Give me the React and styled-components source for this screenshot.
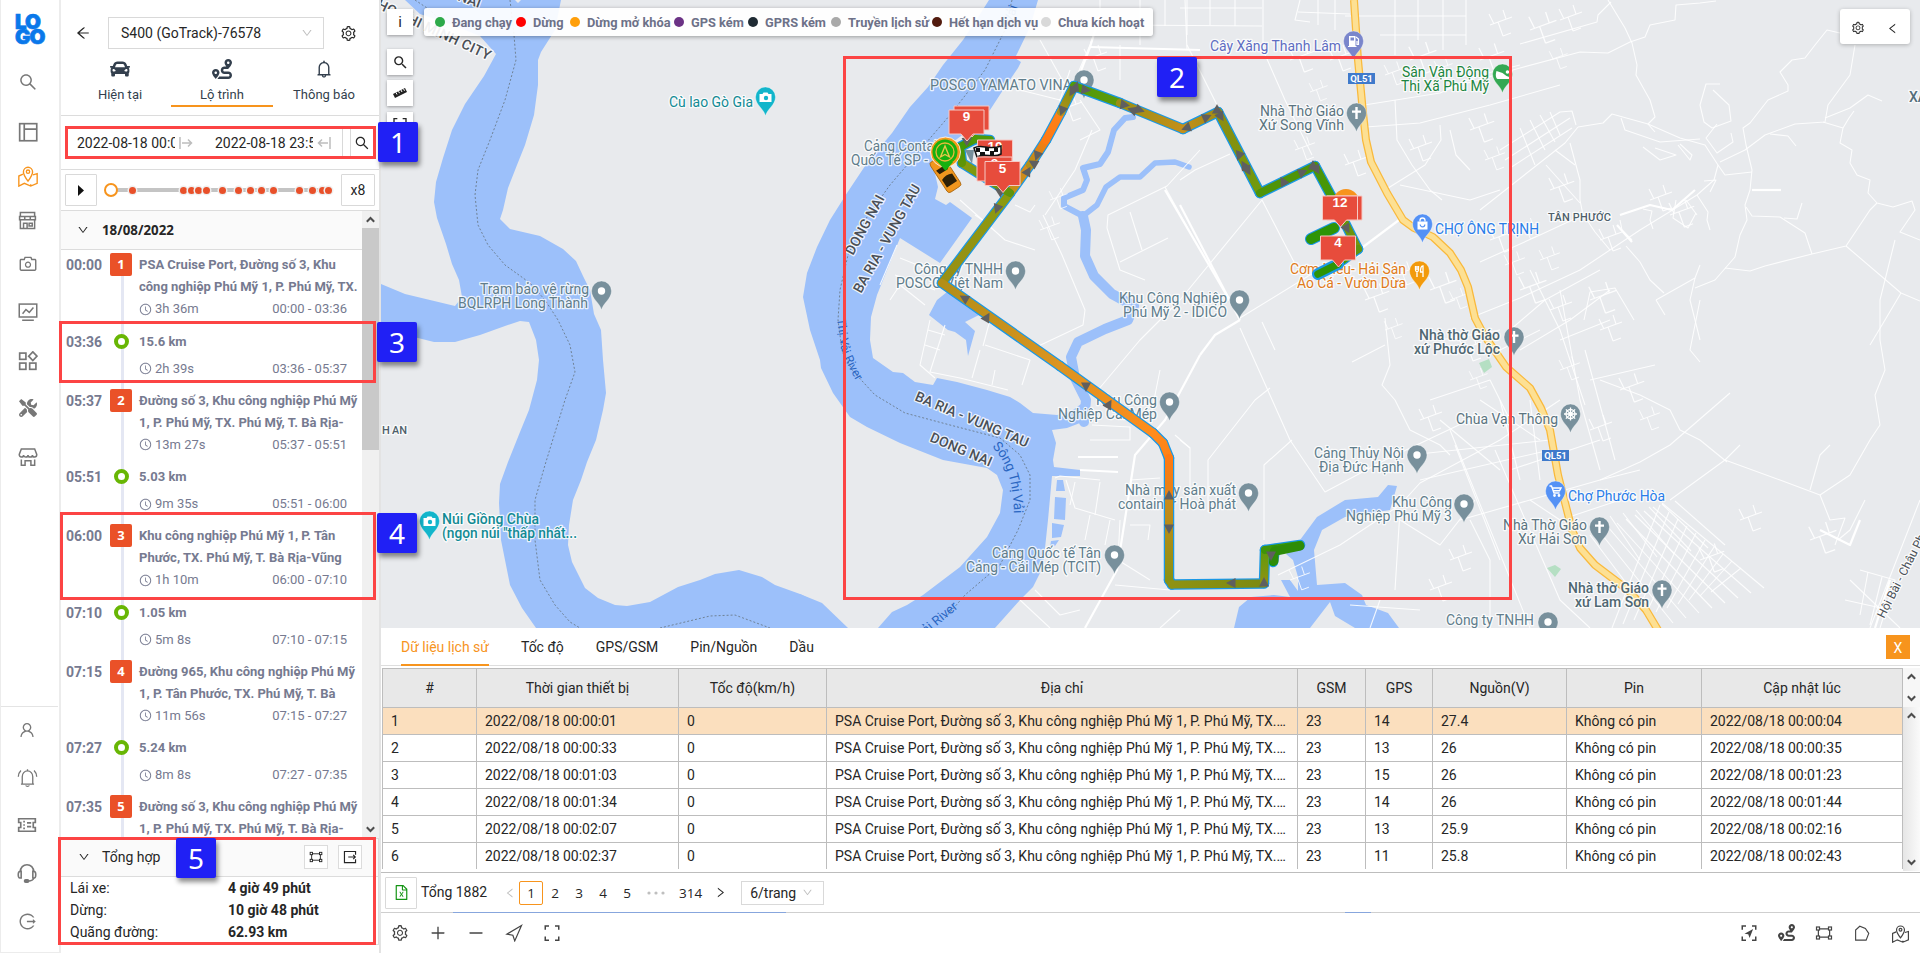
import React from 'react';
import styled, { createGlobalStyle, css } from 'styled-components';
import {
  AiOutlineSetting, AiOutlineSearch, AiOutlineArrowLeft, AiOutlineDown, AiOutlineCamera,
  AiOutlineUser, AiOutlineLogout, AiOutlineClockCircle,
  AiOutlineBell, AiOutlineLeft, AiOutlineRight, AiOutlinePlus, AiOutlineMinus, AiOutlineFileExcel,
} from 'react-icons/ai';
import { FaCar, FaRoute, FaTools } from 'react-icons/fa';
import { MdSearch } from 'react-icons/md';

const ORANGE = '#f7941d';
const SLATE = '#607d8b';

const GlobalStyle = createGlobalStyle`
  * { box-sizing: border-box; }
  body { margin: 0; background: #fff; overflow: hidden; }
  body, text { font-family: Roboto, "Liberation Sans", sans-serif; }
  body { font-size: 14px; color: #262626; }
  svg { display: block; flex: none; }
`;

const Screen = styled.div`
  position: relative;
  display: flex;
  width: 1920px;
  height: 953px;
  overflow: hidden;
`;

/* ---------- navigation rail ---------- */
const Rail = styled.nav`
  width: 61px;
  flex: none;
  display: flex;
  flex-direction: column;
  border-left: 1px solid #ececec;
  border-right: 2px solid #ececec;
  border-bottom: 1px solid #ececec;
  color: #777;
`;
const Logo = styled.div`
  height: 57px;
  padding: 14px 0 0 14px;
  font: 900 20.5px/15px Inter, sans-serif;
  letter-spacing: -0.9px;
  color: #0a78ea;
  -webkit-text-stroke: 0.7px #0a78ea;
`;
const RailItem = styled.div`
  height: ${(p) => p.$h || 48}px;
  padding-right: 5px;
  display: flex;
  align-items: center;
  justify-content: center;
  color: ${(p) => (p.$on ? ORANGE : 'inherit')};
`;
const RailTop = styled.div`flex: 1;`;
const RailBottom = styled.div`
  height: 246px;
  margin-right: 1px;
  border-top: 1px solid #e4e4e4;
`;

/* ---------- left panel ---------- */
const Panel = styled.aside`
  width: 320px;
  flex: none;
  display: flex;
  flex-direction: column;
  border-right: 2px solid #e3e3e3;
`;
const PanelTop = styled.div`
  height: 116px;
  border-bottom: 1px solid #dcdcdc;
`;
const VehicleRow = styled.div`
  display: flex;
  align-items: center;
  height: 49px;
  padding: 17px 22px 0 14px;
  svg.gear { margin-left: auto; }
`;
const VehicleSelect = styled.div`
  width: 216px;
  height: 32px;
  margin-left: 17px;
  padding: 0 10px 0 12px;
  display: flex;
  align-items: center;
  justify-content: space-between;
  border: 1px solid #d9d9d9;
`;
const PanelTabs = styled.div`
  display: flex;
  padding: 0 3px 0 8px;
`;
const PanelTab = styled.div`
  width: 102px;
  height: 58px;
  padding-top: 10px;
  display: flex;
  flex-direction: column;
  align-items: center;
  gap: 8px;
  font-size: 13px;
  color: #333f4d;
  border-bottom: 2px solid ${(p) => (p.$on ? ORANGE : 'transparent')};
`;
const RangeRow = styled.div`
  display: flex;
  align-items: center;
  height: 54px;
  padding-left: 16px;
  border-bottom: 1px solid #dcdcdc;
`;
const DateText = styled.div`
  width: ${(p) => p.$w}px;
  margin-right: 4px;
  overflow: hidden;
  white-space: nowrap;
`;
const RangeArrow = styled.svg`margin-right: ${(p) => p.$gap}px;`;
const RangeSearch = styled.div`
  height: 30px;
  width: 9px;
  margin-right: 3px;
  border: solid #d9d9d9;
  border-width: 0 1px;
`;
const PlayerRow = styled.div`
  height: 41px;
  display: flex;
  align-items: center;
  padding: 0 3px 0 4px;
  border-bottom: 1px solid #dcdcdc;
`;
const SquareButton = styled.div`
  width: ${(p) => p.$w}px;
  height: 32px;
  display: flex;
  align-items: center;
  justify-content: center;
  border: 1px solid #d9d9d9;
  border-radius: 1px;
`;
const Slider = styled.div`
  position: relative;
  width: 220px;
  height: 4px;
  margin: 0 10px 0 14px;
  background: #c4c4c4;
`;
const SliderDot = styled.i`
  position: absolute;
  top: -1.5px;
  width: 7px;
  height: 7px;
  margin-left: -3.5px;
  border-radius: 50%;
  background: #e8502a;
  box-shadow: 0 0 0 1.5px #efefef;
`;
const SliderHandle = styled.i`
  position: absolute;
  top: -5px;
  left: -7px;
  width: 14px;
  height: 14px;
  border: 2px solid ${ORANGE};
  border-radius: 50%;
  background: #fff;
`;
const ScrollArea = styled.div`
  display: flex;
  height: 627px;
  overflow: hidden;
`;
const Timeline = styled.div`
  flex: 1;
  min-width: 0;
`;
const DayHeader = styled.div`
  display: flex;
  align-items: center;
  gap: 13px;
  height: 39px;
  padding-left: 16px;
  background: #fafafa;
  border-bottom: 1px solid #dcdcdc;
  font-weight: 700;
  font-family: "Noto Sans", Roboto, sans-serif;
  font-size: 13.3px;
`;
const Stops = styled.div`
  padding-top: 3px;
  color: #767a90;
  background: linear-gradient(#e4e7f3, #e4e7f3) 60px 20px / 3px 100% no-repeat;
`;
const Stop = styled.div`
  display: grid;
  grid-template-columns: 49px 22px 1fr;
  height: ${(p) => (p.$move ? 59 : 76.5)}px;
  padding-left: 5px;
`;
const StopTime = styled.div`
  padding-top: 1px;
  font-weight: 700;
  line-height: 22px;
`;
const StopBadge = styled.div`
  height: 23px;
  margin-left: -5px;
  width: 22px;
  border-radius: 2px;
  background: #ea5128;
  color: #fff;
  font: 700 13px/22px "Open Sans", sans-serif;
  text-align: center;
`;
const MoveRing = styled.div`
  width: 15px;
  height: 15px;
  margin: 4px 0 0 -1px;
  border: 4px solid #68b604;
  border-radius: 50%;
  background: #fff;
`;
const StopBody = styled.div`
  min-width: 0;
  padding: 1px 15px 0 2px;
  font-size: 13px;
  line-height: 22px;
`;
const Address = styled.div`
  font-weight: 700;
  white-space: nowrap;
`;
const StopMeta = styled.div`
  display: flex;
  align-items: center;
  gap: 3px;
  margin-top: ${(p) => (p.$move ? 5 : 0)}px;
  span:last-child { margin-left: auto; }
`;
const Scrollbar = styled.div`
  width: 17px;
  flex: none;
  display: flex;
  flex-direction: column;
  align-items: center;
  justify-content: space-between;
  padding: 5px 0;
  background: ${(p) => p.$bg || '#f0f0f0'};
  height: ${(p) => (p.$h ? p.$h + 'px' : 'auto')};
`;
const Thumb = styled.div`
  width: 17px;
  height: 222px;
  margin-top: 5px;
  margin-bottom: auto;
  background: #c9c9c9;
`;
const Summary = styled.section`
  height: 107px;
  border: 1px solid #dcdcdc;
  border-left: 0;
`;
const SummaryHead = styled.div`
  display: flex;
  align-items: center;
  height: 38px;
  padding: 0 16px 1px 17px;
  background: #fafafa;
  border-bottom: 1px solid #dcdcdc;
  span { margin: 0 auto 0 12px; }
`;
const MiniButton = styled.div`
  width: 24px;
  height: 24px;
  margin-left: 10px;
  display: flex;
  align-items: center;
  justify-content: center;
  background: #fff;
  border: 1px solid #dcdcdc;
`;
const SummaryRow = styled.div`
  display: grid;
  grid-template-columns: 158px 1fr;
  padding-left: 9px;
  line-height: 22px;
`;

/* ---------- main column ---------- */
const Main = styled.main`
  flex: 1;
  min-width: 0;
  display: flex;
  flex-direction: column;
`;
const MapArea = styled.div`
  position: relative;
  height: 628px;
  overflow: hidden;
  background: #e8eaed;
`;
const MapButtons = styled.div`
  position: absolute;
  left: 6px;
  top: 9px;
  display: flex;
  flex-direction: column;
  gap: 5px;
`;
const MapButton = styled.div`
  width: 26px;
  height: 26px;
  display: flex;
  align-items: center;
  justify-content: center;
  background: #fff;
  box-shadow: 0 1px 3px rgba(0, 0, 0, 0.35);
  margin-bottom: ${(p) => p.$mb || 0}px;
  font-size: 15px;
`;
const Legend = styled.div`
  position: absolute;
  left: 43px;
  top: 8px;
  width: 729px;
  height: 28px;
  padding-left: 11px;
  display: flex;
  align-items: center;
  border-radius: 3px;
  background: rgba(255, 255, 255, 0.92);
  box-shadow: 0 1px 4px rgba(0, 0, 0, 0.35);
  color: #6d7188;
  font-weight: 700;
  font-size: 12.8px;
`;
const LegendItem = styled.div`
  width: ${(p) => p.$w}px;
  flex: none;
  display: flex;
  align-items: center;
  gap: 7px;
  white-space: nowrap;
  &::before {
    content: '';
    flex: none;
    width: 10px;
    height: 10px;
    border-radius: 50%;
    background: ${(p) => p.$c};
  }
`;
const MapTools = styled.div`
  position: absolute;
  right: 10px;
  top: 9px;
  width: 70px;
  height: 35px;
  display: flex;
  align-items: center;
  justify-content: space-between;
  padding: 3px 11px 0;
  border-radius: 3px;
  background: #fff;
  box-shadow: 0 1px 4px rgba(0, 0, 0, 0.25);
`;
const DataTabs = styled.div`
  display: flex;
  gap: 32px;
  height: 38px;
  padding: 0 10px 0 20px;
  border-bottom: 1px solid #dedede;
`;
const DataTab = styled.div`
  padding-top: 2px;
  line-height: 35px;
  height: 38px;
  color: ${(p) => (p.$on ? ORANGE : 'inherit')};
  border-bottom: 2px solid ${(p) => (p.$on ? ORANGE : 'transparent')};
`;
const CloseButton = styled.div`
  width: 24px;
  height: 24px;
  margin: 7px 0 0 auto;
  padding-top: 2px;
  display: flex;
  align-items: center;
  justify-content: center;
  background: ${ORANGE};
  color: #fff;
`;
const TableWrap = styled.div`
  height: 205px;
  margin-top: 2px;
  padding-left: 1px;
  display: flex;
  border-bottom: 1px solid #bdbdbd;
`;
const Table = styled.div`
  width: 1521px;
  border-top: 1px solid #bdbdbd;
  border-left: 1px solid #bdbdbd;
  height: 201px;
  overflow: hidden;
`;
const TableRow = styled.div`
  display: grid;
  grid-template-columns: 94px 202px 148px 471px 68px 67px 134px 135px 201px;
  background: ${(p) => (p.$head ? '#e8e8e8' : p.$on ? '#fbdfbe' : '#fff')};
  height: ${(p) => (p.$head ? 39 : 27)}px;
  line-height: ${(p) => (p.$head ? 39 : 27)}px;
  text-align: ${(p) => (p.$head ? 'center' : 'left')};
`;
const Cell = styled.div`
  padding: 0 8px;
  border-right: 1px solid #bdbdbd;
  border-bottom: 1px solid #bdbdbd;
  white-space: nowrap;
  overflow: hidden;
  text-overflow: ellipsis;
`;
const TableBars = styled.div`width: 17px;`;
const Pager = styled.div`
  height: 39px;
  display: flex;
  align-items: center;
  padding-left: 4px;
`;
const PagerTotal = styled.span`margin: 0 13px 1px 4px;`;
const PageItem = styled.div`
  width: ${(p) => p.$w || 24}px;
  height: 24px;
  display: flex;
  align-items: center;
  justify-content: center;
  font: 13.5px "Open Sans", sans-serif;
  color: ${(p) => (p.$dim ? '#bfbfbf' : '#262626')};
  ${(p) => p.$on && css`border: 1px solid ${ORANGE}; border-radius: 2px;`}
`;
const PageSize = styled.div`
  width: 83px;
  height: 24px;
  margin-left: 9px;
  padding: 0 10px 0 8px;
  display: flex;
  align-items: center;
  justify-content: space-between;
  border: 1px solid #d9d9d9;
`;
const MapEdge = styled.div`
  height: 1px;
  background: linear-gradient(90deg, #cfcfcf 72px, #87a6dd 72px 405px, #cfcfcf 405px 964px, #87a6dd 964px 990px, #cfcfcf 990px);
`;
const Toolbar = styled.footer`
  flex: 1;
  display: flex;
  align-items: center;
  justify-content: space-between;
  padding: 0 10px;
  color: #444;
`;
const ToolGroup = styled.div`
  display: flex;
  gap: 20px;
`;

/* ---------- annotations over the page ---------- */
const Frame = styled.div`
  position: absolute;
  left: ${(p) => p.$x}px;
  top: ${(p) => p.$y}px;
  width: ${(p) => p.$w}px;
  height: ${(p) => p.$h}px;
  border: 3px solid #fc4444;
`;
const Callout = styled.div`
  position: absolute;
  left: ${(p) => p.$x}px;
  top: ${(p) => p.$y}px;
  width: 40px;
  height: 40px;
  border-radius: 2px;
  background: #2020f5;
  color: #fff;
  text-align: center;
  font: 28px/40px "Noto Sans", sans-serif;
  box-shadow: 2px 4px 5px rgba(0, 0, 0, 0.45);
`;

/* ---------- line icons ---------- */
const Line = ({ size = 20, w = 1.6, children }) => (
  <svg width={size} height={size} viewBox="0 0 24 24" fill="none" stroke="currentColor" strokeWidth={w}>{children}</svg>
);
const LayoutIcon = () => <Line w={2}><rect x="2" y="2" width="20.5" height="20.5" /><path d="M7.5 2v20.5M7.5 8.5h15" /></Line>;
const MapPinIcon = ({ size = 22, w = 1.5 }) => (
  <Line size={size} w={w}>
    <path d="M12 17.5C9 13.500 7 10.600 7 7.500a5 5 0 0 1 10 0C17 10.600 15 13.500 12 17.500z" /><circle cx="12" cy="7.300" r="1.800" />
    <path d="M6.500 10 2 12v11l6-3 7 3 7-3V9.500l-4.500 1.300M15 23v-2" />
  </Line>
);
const StoreIcon = () => (
  <Line w={1.9} size={19}>
    <path d="M3 6.500V2h18v4.500M2 7h20v4H2zM3 11v11h18V11M7 22v-6.500h4.500V22M14 15.500h4v3.500h-4zM8.500 7v4M15.500 7v4" />
  </Line>
);
const StallIcon = () => (
  <Line w={1.8} size={20}>
    <path d="M4 2.500h16L22.500 9c0 2-1 3-2.500 3s-2.700-1-2.700-2.500C17.300 11 16 12 14.700 12S12 11 12 9.500C12 11 10.700 12 9.300 12s-2.600-1-2.600-2.500C6.700 11 5.500 12 4 12s-2.500-1-2.500-3zM4 15v7h4.500v-5.500h7V22H20v-7" />
  </Line>
);
const MonitorIcon = () => <Line w={1.8}><rect x="1.500" y="2.500" width="21" height="15.500" /><path d="m5.500 14 4-5 4 3.500 5-6M5 22h14" /></Line>;
const ShapesIcon = () => (
  <Line w={2}><rect x="2" y="2.500" width="7.500" height="7.500" /><rect x="2" y="14.500" width="7.500" height="7.500" /><rect x="14" y="14.500" width="7.500" height="7.500" /><path d="m17.800 1 5 5.200-5 5.200-5-5.200z" /></Line>
);
const RingingIcon = () => (
  <Line size={21} w={1.5}><path d="M4.500 19.500h15M6 19.500V11c0-3.500 2.500-6.500 6-6.500s6 3 6 6.500v8.500M12 4.500V2.500M10 21c.5 1.500 3.500 1.500 4 0M4.500 4C2.500 6 1.500 8 1.500 11M19.500 4c2 2 3 4 3 7" /></Line>
);
const TicketIcon = () => (
  <Line w={2}><path d="M2 4.500h20v4.500h-2.500v6H22v4.500H2V15h2.500V9H2z" /><path d="M8.500 7v10" strokeDasharray="2 2" /><path d="M12 9.500h5M12 14h5" /></Line>
);
const HeadsetIcon = () => (
  <Line w={1.9}><path d="M4 10.500C4 5.500 7.500 2 12 2s8 3.500 8 8.500M20 18c0 2-3 3.500-6 3.500" /><path d="M5 10v8H3.500C2 18 1.500 16 1.500 14S2 10 3.500 10zM19 10v8h1.500c1.500 0 2-2 2-4s-.5-4-2-4z" /><rect x="9" y="20" width="5" height="3" rx="1.500" fill="currentColor" /></Line>
);
const PolygonIcon = ({ size = 18 }) => (
  <Line size={size} w={1.6}><rect x="2" y="4" width="4" height="4" /><rect x="18" y="4" width="4" height="4" /><rect x="2" y="16" width="4" height="4" /><rect x="18" y="16" width="4" height="4" /><path d="M6 6.500h12M6 17.500h12M4.500 8v8M19.500 8v8" /></Line>
);
const ExitIcon = () => <Line size={14} w={2}><path d="M21.500 8V2.500h-19v19h19V16M9 12h12M17.500 8.500 21 12l-3.500 3.500" /></Line>;
const ExpandIcon = ({ size = 18, children }) => <Line size={size} w={2}><path d="M8 2.500H3v5M16 2.500h5v5M8 21.500H3v-5M16 21.500h5v-5" />{children}</Line>;
const Chevron = ({ up }) => (
  <svg width="9" height="7" viewBox="0 0 9 7" fill="none" stroke="#4d4d4d" strokeWidth="2"><path d={up ? 'M.8 5.800 4.500 2l3.700 3.800' : 'M.8 1.200 4.500 5l3.700-3.800'} /></svg>
);

/* ---------- map drawing ---------- */
const WATER = [
  'M405 0 420 14 450 24 480 36 496 54 484 76 465 104 452 130 443 158 436 182 434 202 437 218 446 244 452 264 459 280 462 297 455 306 430 300 405 294 381 284V328L400 334 418 338 434 342 455 342 480 335 505 326 520 321 529 322 536 340 539 360 537 380 529 410 520 432 508 462 500 484 499 503 501 540 510 585 522 608 536 628H847L832 615 816 602 800 594 775 585 762 577 739 570 715 574 700 580 678 587 650 602 627 606 615 605 598 598 585 588 572 562 568 545 569 525 573 500 581 480 587 462 596 440 603 410 606 393 603 360 601 330 594 314 590 290 583 276 576 261 563 249 540 236 510 229 500 219 503 210 508 188 517 165 525 145 534 115 538 85 538 60 541 52 555 30 561 0z',
  'M989 0 975 22 963 40 943 65 928 87 910 107 892 133 867 163 847 193 830 220 817 247 807 273 803 297 810 330 820 360 821 368 833 393 850 417 867 427 900 443 943 460 987 468 997 475 1003 490 1000 513 987 537 960 567 923 595 907 605 892 612 878 628H995L1020 600 1033 587 1043 567 1048 520 1052 476 1080 476 1080 470 1054 467 1053 460 1056 443 1052 430 1067 428 1080 423 1090 410 1089 398 1073 410 1057 415 1033 413 1020 403 1010 397 987 390 957 382 937 378 933 385 915 382 903 373 893 372 873 358 870 340 871 317 877 295 900 238 940 263 972 218 950 202 946 205 935 199 938 187 932 160 945 148 965 133 990 110 1003 90 1018 68 1021 62 1015 58 1030 27 1038 0z',
  'M929 315 937 300 952 288 985 312 965 322 975 331 968 356 966 340 955 332 948 330z',
  'M1057 480h6l2 11h-9zM1055 497l11 1-1 22-11-1zM1052 523l12 2-3 12-9 1zM1051 541l8-1-4 6-5 1z',
  'M1388 485 1397 486 1390 510 1345 517 1322 530 1314 550 1317 585 1345 583 1362 595 1366 605 1388 613 1399 628H1355L1335 616 1330 602 1310 628H1234L1239 607 1251 597 1274 595 1290 597 1281 580 1290 580 1298 591 1298 577 1293 560 1286 554 1300 540 1317 517 1345 500 1378 497z',
  'M778 628 800 594 822 603 848 628z',
];
const STREAMS = [
  ['1084,422 1086,400 1075,378 1071,357 1078,342 1105,329 1128,320 1134,306 1112,294 1094,276 1085,256 1086,230 1083,216', 10],
  ['1083,216 1064,206 1064,198 1083,190 1087,180 1083,168 1100,164 1108,152 1114,130 1125,118 1133,117', 6],
  ['1083,216 1097,205 1106,187 1120,177 1140,177 1155,163 1175,162 1189,167', 5.500],
];
const DASHES = [
  '415,0 430,10 440,20', '510,0 514,35 516,60 505,100 490,140 478,170 475,195 478,225 488,245 505,265 530,283 545,300 558,320 570,345 575,372 565,400 545,465 535,500 535,540 540,580 555,605 570,622 580,628',
  '1012,0 1005,30 985,70 950,115 890,185 865,220 848,255 840,290 838,320 842,350 852,370 875,395 905,413 950,425 1000,438 1020,455 1030,475 1030,500 1018,530 1000,565 965,595 945,618', '660,628 710,616 735,615 770,628',
];
const ROADS = [
  '1520,44 1597,22 1598,15 1611,2', '1450,88 1520,68 1580,52 1608,53 1630,42 1645,37 1650,25 1675,20 1676,5 1700,3 1716,1',
  '1608,0 1625,28 1632,43 1637,65 1636,75 1650,100 1655,117 1648,124 1680,138 1705,145 1718,165 1714,180 1697,195 1640,230 1580,270 1520,298 1470,318',
  '1578,127 1603,123 1612,114 1648,124 1655,132', '1621,118 1625,130 1660,142 1700,139', '1643,147 1660,160 1676,155 1655,148', '1678,145 1690,160 1692,155 1680,144',
  '1720,84 1706,84 1700,105 1704,122 1712,128 1731,121 1729,105 1713,90', '1717,124 1706,138 1717,153 1733,142 1731,133',
  '1840,33 1827,30 1815,45 1805,58 1792,60 1780,72 1788,85 1788,91 1768,100 1750,123 1743,128 1746,145 1752,170 1750,190 1745,205 1747,220 1740,235 1735,257 1715,280 1695,288',
  '1855,45 1850,75 1828,105 1825,122 1795,124 1765,135 1745,150 1720,162', '1825,118 1850,108 1868,95 1882,101', '1770,134 1788,136 1796,146', '1854,111 1849,118 1843,128',
  '1823,122 1843,128 1840,143 1852,150 1850,163 1857,175 1870,180 1868,193 1877,203 1893,207 1912,201 1915,210 1900,232 1920,240',
  '1877,203 1870,210 1846,246 1812,254 1765,266 1750,271 1725,268', '1846,246 1901,293 1920,301', '1901,293 1885,320 1870,345',
  '1746,207 1752,216 1780,217 1805,233 1812,254', '1784,218 1797,219 1802,203', '1718,165 1725,175 1752,172', '1752,190 1781,190',
  '1697,195 1708,212 1707,220 1710,230', '1704,181 1716,180 1710,192', '1480,210 1565,143 1578,127', '1570,143 1580,180 1580,200 1583,215 1540,235 1480,262', '1546,165 1580,203', '1555,150 1575,165',
  '1587,220 1595,232 1610,250', '1626,246 1640,262 1650,280 1664,293', '1584,320 1590,292 1615,288 1634,320', '1656,300 1695,278 1700,265', '1656,300 1665,315', '1695,278 1690,300 1700,340',
  '1620,220 1622,230 1632,240', '1643,209 1652,211 1650,220 1653,229', '1686,200 1697,215', '1676,200 1673,218 1688,228 1696,213',
  '1187,0 1187,35', '1263,0 1263,50 1285,100 1312,155', '1120,25 1262,26', '1187,45 1218,107', '1180,180 1195,170 1230,154', '1180,8 1262,8', '1210,0 1210,25', '1235,0 1235,26',
  '1345,16 1466,16', '1395,0 1395,55', '1418,0 1418,40', '1443,0 1443,50', '1466,0 1466,45', '1380,35 1466,35', '1298,12 1350,14', '1300,0 1295,20 1310,22', '1318,0 1318,25', '1335,0 1335,30',
  '1395,100 1397,140 1412,165 1430,190 1442,200', '1358,106 1440,93 1480,75 1520,65', '1366,127 1420,123 1490,105 1560,85', '1385,190 1425,165 1441,140 1440,125', '1400,185 1470,200 1500,190',
  '1450,130 1456,155 1470,170', '1500,150 1560,112 1572,111 1576,125', '1505,160 1570,118', '1510,168 1572,128', '1520,128 1535,165', '1530,120 1545,150', '1540,115 1555,142', '1550,112 1560,135',
  '1180,300 1262,200 1294,262', '1043,215 1062,255 1085,310 1083,325 1030,350', '1107,228 1108,215 1167,186 1200,150', '1165,187 1200,250', '1107,228 1120,270 1145,280', '1120,262 1168,238', '1130,212 1142,250',
  '1100,0 1100,15 1090,45 1075,80', '1140,0 1140,45', '1165,0 1165,26', '1185,0 1187,50', '1120,45 1120,80', '1045,215 1075,170 1092,130', '1040,40 1065,85', '1020,90 1060,100 1070,70', '1080,100 1100,130 1080,140', '1035,205 1030,212 1015,205',
  '960,200 1005,240 1035,250', '975,215 990,225', '1240,318 1310,275 1345,262 1360,255', '1262,322 1275,350', '1240,328 1290,440 1325,492 1385,460 1480,415',
  '1385,318 1390,365 1382,385 1395,400 1410,430 1440,445 1450,455', '1352,362 1385,345', '1208,512 1208,460 1255,400 1270,388', '1264,540 1264,465 1292,440', '1180,440 1190,448 1190,500',
  '1278,575 1340,545 1400,505 1420,483 1500,440 1560,400', '1470,520 1490,560 1490,628', '1495,450 1560,600 1590,628', '1455,445 1500,560', '1450,430 1530,628', '1400,510 1395,590', '1460,520 1530,500 1600,480 1640,470', '1400,520 1440,545 1475,500',
  '1895,240 1880,300 1880,340 1885,370 1875,395 1880,425 1870,440 1850,475 1820,495 1780,480 1725,460 1670,500', '1730,393 1670,445 1640,462 1600,480', '1725,460 1740,445', '1830,445 1820,455 1810,490', '1820,495 1830,520 1845,518 1835,545', '1865,500 1850,530 1838,540',
  '1600,380 1640,395 1670,410 1680,430 1700,440 1727,462', '1700,300 1690,350 1700,362', '1560,290 1580,400 1600,470', '1530,270 1560,330 1585,405', '1510,330 1545,300 1600,270', '1520,350 1570,320 1610,290', '1560,340 1610,320', '1590,380 1655,365', '1500,350 1540,330', '1585,350 1615,460',
  '1440,340 1500,330', '1430,400 1490,380 1510,420', '1440,420 1500,470', '1480,400 1540,440', '1410,455 1550,440', '1420,480 1550,450', '1510,470 1600,440', '1530,500 1560,520 1620,500', '1500,400 1520,480', '1530,400 1540,480',
  '1870,628 1920,500', '1850,580 1900,628', '1860,570 1895,580 1880,628', '1845,600 1890,610', '1868,572 1860,615', '1882,577 1870,625',
  '930,320 920,365 935,378', '945,325 930,372 960,378 1008,390', '928,330 945,335', '925,345 940,350', '985,345 1030,360 1022,385', '980,350 972,378', '983,346 990,320', '995,370 992,385',
  '1055,478 1060,476 1100,480', '1066,480 1075,508 1115,520', '1075,482 1070,505', '1100,482 1095,515', '1090,515 1085,540', '1110,520 1105,545', '1120,520 1118,560 1150,580', '1130,525 1150,525 1148,540', '1160,370 1150,420', '1175,435 1190,448',
  '1092,425 1130,427 1130,440 1090,440z', '1098,390 1140,340 1180,300', '1020,600 1050,628', '1035,590 1060,615 1080,610', '1115,585 1170,590', '1130,480 1160,478',
  '880,285 897,245', '890,300 900,285 925,305', '895,275 935,290', '900,258 930,270', '1180,610 1160,628', '1350,605 1420,610', '1370,628 1380,600',
];
const GRID = [];
for (let i = 0; i < 10; i++) GRID.push(`${1612 + i * 11},${628 - i * 4} ${1660 + i * 9},${505 + i * 7}`);
for (let i = 0; i < 9; i++) GRID.push(`${1590 + i * 9},${535 - i * 4} ${1660 + i * 13},${628 - i * 5}`);
for (let i = 0; i < 6; i++) GRID.push(`${1610 + i * 13},${516 - i * 3} ${1640 + i * 17},${560 - i * 3}`);
const TWIGS = [
  [1290, 60, 1.1], [1310, 92, 0.8], [1330, 60, 1], [1385, 75, 0.9], [1410, 60, 1.2], [1435, 70, 0.8], [1470, 130, 1.1], [1485, 160, 0.9], [1410, 150, 1], [1430, 290, 1.2], [1450, 300, 0.8],
  [1490, 240, 1.1], [1505, 265, 0.9], [1520, 290, 1.2], [1540, 260, 0.9], [1550, 310, 1], [1520, 230, 0.8], [1395, 275, 0.9], [1365, 300, 1.1], [1385, 330, 0.8], [1460, 350, 1], [1470, 380, 0.8], [1420, 420, 1],
  [1590, 300, 1.2], [1600, 330, 1], [1620, 390, 1.1], [1640, 420, 0.9], [1590, 430, 1], [1560, 370, 0.9], [1650, 200, 1], [1670, 215, 1.1], [1600, 240, 1], [1550, 190, 1.1], [1530, 30, 1.2], [1560, 20, 1], [1550, 60, 0.8],
  [1490, 25, 1], [1480, 60, 1.1], [1345, 165, 1], [1320, 120, 1], [1295, 150, 0.9], [1060, 110, 1], [1050, 200, 0.8], [1085, 60, 1], [1290, 580, 0.9], [1450, 560, 1], [1430, 590, 1], [1740, 520, 1], [1700, 560, 1.1], [1810, 540, 1.2], [1040, 230, 0.9],
];
const WIDE = ['1180,205 1240,320', '1200,355 1215,335 1240,320', '1200,355 1165,420 1135,455 1128,500 1117,570 1085,628', '1165,190 1240,318', '1363,247 1403,217', '1090,47 1200,50', '1100,15 1090,47 1068,105', '1078,457 1118,457', '1080,470 1118,472', '1620,215 1650,205 1672,210 1695,190', '1617,225 1632,242', '1752,190 1781,190', '1860,520 1850,545 1820,530', '1890,580 1875,628'];
const HIGHWAY = '1354,0 1358,60 1363,113 1366,140 1371,162 1387,193 1403,220 1414,228 1433,237 1450,253 1461,270 1468,287 1475,318 1484,335 1506,367 1530,388 1541,408 1550,430 1558,475 1572,530 1580,548 1595,565 1628,590 1646,610 1658,630';

const G = '#5b7480';
const LABELS = [
  [669, 753, 107, 'Cù lao Gò Gia', '#128a94'], [480, 589, 294, 'Trạm bảo vệ rừng', SLATE], [458, 588, 308, 'BQLRPH Long Thành', SLATE],
  [930, 1072, 90, 'POSCO YAMATO VINA', SLATE], [864, 956, 151, 'Cảng Container', SLATE], [851, 928, 165, 'Quốc Tế SP -', SLATE],
  [914, 1003, 274, 'Công ty TNHH', SLATE], [896, 1003, 288, 'POSCO Việt Nam', SLATE], [1119, 1227, 303, 'Khu Công Nghiệp', SLATE], [1123, 1227, 317, 'Phú Mỹ 2 - IDICO', SLATE],
  [1096, 1157, 405, 'Khu Công', SLATE], [1058, 1157, 419, 'Nghiệp Cái Mép', SLATE], [1125, 1236, 495, 'Nhà máy sản xuất', SLATE], [1118, 1236, 509, 'container Hoà phát', SLATE],
  [992, 1101, 558, 'Cảng Quốc tế Tân', SLATE], [966, 1101, 572, 'Cảng - Cái Mép (TCIT)', SLATE], [1314, 1404, 458, 'Cảng Thủy Nội', SLATE], [1319, 1404, 472, 'Địa Đức Hạnh', SLATE],
  [1392, 1452, 507, 'Khu Công', SLATE], [1346, 1452, 521, 'Nghiệp Phú Mỹ 3', SLATE], [1210, 1341, 51, 'Cây Xăng Thanh Lâm', '#5f6dc2'],
  [1260, 1344, 116, 'Nhà Thờ Giáo', G], [1259, 1344, 130, 'Xứ Song Vĩnh', G], [1402, 1489, 77, 'Sân Vận Động', '#1c8540'], [1401, 1489, 91, 'Thị Xã Phú Mỹ', '#1c8540'],
  [1435, 1539, 234, 'CHỢ ÔNG TRỊNH', '#2a7de9'], [1290, 1406, 274, 'Cơm Niêu- Hải Sản', '#e07b1a'], [1297, 1406, 288, 'Ao Cá - Vườn Dừa', '#e07b1a'],
  [1419, 1500, 340, 'Nhà thờ Giáo', '#4f6772', 500], [1414, 1500, 354, 'xứ Phước Lộc', '#4f6772', 500], [1456, 1558, 424, 'Chùa Vạn Thông', G], [1568, 1665, 501, 'Chợ Phước Hòa', '#2a7de9'],
  [1503, 1587, 530, 'Nhà Thờ Giáo', G], [1518, 1587, 544, 'Xứ Hải Sơn', G], [1568, 1649, 593, 'Nhà thờ Giáo', '#4f6772', 500], [1575, 1649, 607, 'xứ Lam Sơn', '#4f6772', 500],
  [1446, 1534, 625, 'Công ty TNHH', SLATE], [442, 539, 524, 'Núi Giồng Chùa', '#128a94', 500], [442, 577, 538, '(ngọn núi "thấp nhất...', '#128a94', 500],
];
const PINS = [
  [1084, 80], [1015.5, 271], [1239.5, 300], [1169.5, 402], [1114.5, 555], [1248.500, 493], [1417, 455], [1464, 504], [601.500, 291], [1548, 622],
  [1356.500, 113, '#78909c', 'cross'], [1514, 337, '#78909c', 'cross'], [1599.500, 527, '#78909c', 'cross'], [1662, 590, '#78909c', 'cross'], [1570.500, 414, '#78909c', 'wheel'],
  [1422.500, 224, '#5491f5', 'bag'], [1419.500, 271, '#f29a0c', 'fork'], [1353.500, 41, '#7a86cb', 'gas'], [1502.500, 74, '#34a853', 'swim'], [1555.500, 491, '#5491f5', 'cart'], [765.500, 97, '#12b5cb', 'cam'], [429.500, 521, '#12b5cb', 'cam'],
];
const GLYPHS = {
  cross: <path d="M-1.200-6h2.400v3.500H4.500v2.300H1.200V6h-2.400V-.2h-3.300v-2.300h3.300z" fill="#fff" />,
  wheel: <g stroke="#fff" fill="none" strokeWidth="1.300"><circle r="4.500" /><circle r="1.500" /><path d="M0-6.500v13M-6.500 0h13M-4.600-4.600l9.200 9.200M4.600-4.600l-9.200 9.200" /></g>,
  bag: <g fill="#fff"><path d="M-5-2.500H5v8H-5z" /><path d="M-2.500-2.500v-1a2.500 2.500 0 0 1 5 0v1" fill="none" stroke="#fff" strokeWidth="1.300" /><path d="M-2.300.5a2.300 2.300 0 0 0 4.600 0" fill="none" stroke="#5491f5" strokeWidth="1.200" /></g>,
  fork: <path d="M-4-5v4c0 1.500 1.500 1.800 1.500 1.800V6M-2.500-5v4M-1-5v4c0 1.500-1.500 1.800-1.500 1.800M3.500 6V-5C1.500-5 1-3 1 1h2.500" stroke="#fff" strokeWidth="1.300" fill="none" />,
  gas: <g fill="#fff"><path d="M-4.500-5h6.500V5h1v1h-8.500V5h1z" /><path d="M2.500-4 5-2v5.500H3.500V0" fill="none" stroke="#fff" strokeWidth="1.200" /><path d="M-3-3.500h3.500v3H-3z" fill="#7a86cb" /></g>,
  swim: <g fill="#fff"><circle cx="5" cy="-2" r="1.800" /><path d="M-6-3 0-1 4 2c2 1 4 1 4 1L7 5H-5c-2-1-2-5-1-8z" /></g>,
  cart: <g fill="none" stroke="#fff" strokeWidth="1.400"><path d="M-6-5h2l2.500 7H4M-3.500-3H5.500L4-.2h-6.500" /><circle cx="-1" cy="4.500" r=".7" /><circle cx="3.500" cy="4.500" r=".7" /></g>,
  cam: <g fill="#fff"><path d="M-6-3h3l1-1.500h4L3-3h3v8H-6z" /><circle cx="0.500" cy="1" r="2.200" fill="#12b5cb" /></g>,
};
const Pin = ({ x, y, c = '#78909c', g }) => (
  <g transform={`translate(${x} ${y})`}>
    <path d="M0 19C-1.500 12-10 8-10 0a10 10 0 0 1 20 0C10 8 1.500 12 0 19z" fill={c} stroke="#fff" strokeOpacity=".6" strokeWidth=".6" />
    {g ? GLYPHS[g] : <circle r="3.700" fill="#fff" />}
  </g>
);
const halo = { stroke: '#fff', strokeWidth: 2.6, strokeOpacity: 0.8, strokeLinejoin: 'round', paintOrder: 'stroke' };
const ROUTE = [
  [[1010, 193, 942, 283], '#8a9a10', '#9a8f14'], [[942, 283, 1060, 366], '#b28e18', '#dc9420'], [[1060, 366, 1153, 433], '#dc9420', '#ff8c1c'],
  [[1153, 433, 1163, 443], '#ff8c1c', '#ff861a'], [[1163, 443, 1169, 458], '#ff861a', '#ff8218'],
  [[1169, 458, 1169, 500], '#ff7a14', '#e08418'], [[1169, 500, 1169, 580], '#c98a1c', '#8a9212'], [[1169, 580, 1172, 584.5], '#8a9212', '#8a9212'], [[1172, 584.5, 1264, 583.5], '#8f9212', '#7c8a12'],
  [[1264, 583, 1265, 550], '#8f9212', '#5f9a0c'], [[1265, 550, 1300, 545], '#3f9408', '#2f9a06'], [[1275, 549, 1273, 562], '#2f9406', '#0f9a06'],
  [[1010, 193, 1030, 165], '#c09018', '#d88a1c'], [[1030, 165, 1046, 140], '#b0901a', '#ff7a14'], [[1046, 140, 1061, 112], '#ff7a14', '#ff8218'], [[1061, 112, 1074, 86], '#b0901a', '#7c9010'],
  [[1074, 86, 1120, 103], '#4f9a08', '#5f9a0a'], [[1120, 103, 1183, 129], '#9a8f14', '#c48f1a'], [[1183, 129, 1218, 112], '#c48f1a', '#a08c14'],
  [[1218, 112, 1260, 193], '#8f8c12', '#6f9a0c'], [[1260, 193, 1315, 166], '#4f9408', '#4f9408'], [[1315, 166, 1336, 205], '#4f9408', '#3f9a08'], [[1336, 205, 1358, 249], '#4f9408', '#7c9410'],
  [[1358, 249, 1340, 262], '#5f9410', '#3f9a08'], [[962, 163, 1010, 193], '#8a9a10', '#5f940c'], [[960, 147, 975, 139], '#3f9408', '#4f9a08'], [[975, 139, 990, 140], '#4f9a08', '#4f9a08'], [[962, 163, 960, 147], '#5f9408', '#3f9a08'],
];
const ARROWS = [
  [1076, 86, 20], [1072, 92, -150], [1086, 90, 100], [1062, 111, 200], [1125, 105, 100], [1132, 110, -70], [1140, 110, 110], [1186, 128, -110], [1207, 117, 65], [1217, 109, 0], [1221, 117, 150], [1239, 156, 200], [1244, 165, -30], [1248, 171, 150],
  [1283, 181, -30], [1303, 172, 65], [1313, 165, 0], [1317, 170, 150], [1037, 156, 200], [1033, 163, -60], [1028, 171, 30], [999, 191, -60], [997, 209, 200], [964, 298, -60], [987, 317, 30], [1086, 387, 180], [1109, 404, 30], [1169, 495, 0], [1169, 529, 180], [1231, 583, -90], [1264, 582, 0], [1271, 556, 180], [1347, 229, 150], [968, 140, 60],
];
const Marker = ({ x, y, n, tip = true }) => (
  <g>
    <path d={tip ? `M${x} ${y}h35v24h-11l-6 7-6-7H${x}z` : `M${x} ${y}h35v24H${x}z`} fill="#e74c3c" stroke="#f6c9c4" strokeWidth="1" />
    <text x={x + 17.500} y={y + 11} textAnchor="middle" fill="#fff" fontSize="13.500" fontWeight="700" style={{ fontFamily: 'Liberation Sans' }}>{n}</text>
  </g>
);

function MapDrawing() {
  return (
    <svg width="1539" height="628" viewBox="381 0 1539 628" fill="none">
      <defs>
        <path id="songThiVai" d="M992 447 Q1013 466 1014 515" />
        <path id="riverWest" d="M837 319 L841 348 Q845 362 858 384" />
        {ROUTE.map(([p, a, b], i) => (
          <linearGradient key={i} id={`seg${i}`} gradientUnits="userSpaceOnUse" x1={p[0]} y1={p[1]} x2={p[2]} y2={p[3]}><stop stopColor={a} /><stop offset="1" stopColor={b} /></linearGradient>
        ))}
      </defs>
      <rect x="381" width="1539" height="628" fill="#e8eaed" />
      {WATER.map((d) => <path key={d} d={d} fill="#9cc0fa" />)}
      <path d="M515 0l3 3 3-3zM885 290l9-24 4 2-9 24zM896 262l6-19 4 2-8 19z" fill="#e8eaed" />
      {STREAMS.map(([p, w]) => <polyline key={p} points={p} stroke="#9cc0fa" strokeWidth={w} strokeLinejoin="round" strokeLinecap="round" />)}
      <path d="M1479 363l10-4 3 8-8 6zM1547 568l8-3 6 4-6 8z" fill="#b5dfc3" />
      <g stroke="#fff" strokeWidth="1.100" strokeOpacity=".88" strokeLinejoin="round">
        {ROADS.concat(GRID).map((p) => <polyline key={p} points={p} />)}
        {TWIGS.map(([x, y, s]) => <path key={`${x}-${y}`} transform={`translate(${x} ${y}) scale(${s})`} d="M0 0l22-8M8-3l5 14M16-6l-3-9M13 11l8-3M4-1l-5-10" />)}
      </g>
      {WIDE.map((p) => <polyline key={p} points={p} stroke="#fff" strokeWidth="2.200" strokeLinejoin="round" />)}
      <polyline points={HIGHWAY} stroke="#f9b93c" strokeWidth="8" strokeLinejoin="round" />
      <polyline points={HIGHWAY} stroke="#fde093" strokeWidth="5.500" strokeLinejoin="round" />
      {DASHES.map((p) => <polyline key={p} points={p} stroke="#6f8296" strokeDasharray="2 2" />)}

      <g fontSize="14" fontWeight="500" fill="#4a4f56" {...halo}>
        <text transform="translate(376 8) rotate(25)" textLength="124">HO CHI MINH CITY</text>
        <text transform="translate(457 0) rotate(20)">NAI</text>
        <text transform="translate(853 256) rotate(-61)" textLength="66">DONG NAI</text>
        <text transform="translate(861 294) rotate(-60.500)" textLength="122">BA RIA - VUNG TAU</text>
        <text transform="translate(914 400) rotate(23)" textLength="122">BA RIA - VUNG TAU</text>
        <text transform="translate(929 441) rotate(23)" textLength="66">DONG NAI</text>
        <text transform="translate(1884 619) rotate(-63)" fontSize="12" fontWeight="400">Hội Bài - Châu Pha</text>
      </g>
      <g fill="#2a66c2" fontSize="13.500">
        <text textLength="72"><textPath href="#songThiVai">Sông Thị Vải</textPath></text>
        <text fontSize="12"><textPath href="#riverWest">Thị Vải River</textPath></text>
        <text transform="translate(920 640) rotate(-40)" fontSize="13">Vải River</text>
        <text transform="translate(1012 24) rotate(-72)" fontSize="13">Vải</text>
      </g>

      {LABELS.map(([x0, x1, y, t, c, w = 400]) => (
        <text key={t + y} x={x0} y={y} textLength={x1 - x0} lengthAdjust="spacingAndGlyphs" fontSize="14" fontWeight={w} fill={c} {...halo}>{t}</text>
      ))}
      <g fontSize="11" fontWeight="500" fill="#4f5f6a" {...halo}>
        <text x="1548" y="221" textLength="63">TÂN PHƯỚC</text>
        <text x="382" y="434" textLength="25">H AN</text>
        <text x="1909" y="102" fontSize="14" fill="#546e7a">XA</text>
      </g>
      {PINS.map(([x, y, c, g]) => <Pin key={`${x}-${y}`} x={x} y={y} c={c} g={g} />)}
      {[[1348, 73], [1542, 450]].map(([x, y]) => (
        <g key={x}>
          <rect x={x} y={y} width="27" height="11" fill="#3f7acb" />
          <text x={x + 13.500} y={y + 9.300} textAnchor="middle" fontSize="9.500" fontWeight="700" fill="#fff">QL51</text>
        </g>
      ))}

      <g strokeLinecap="round">
        <g stroke="#1a98e6" strokeWidth="10.500">
          {ROUTE.map(([p], i) => <path key={i} d={`M${p[0]} ${p[1]}L${p[2]} ${p[3]}`} />)}
        </g>
        {ROUTE.map(([p], i) => <path key={i} d={`M${p[0]} ${p[1]}L${p[2]} ${p[3] + (p[3] === p[1] ? 0.01 : 0)}`} stroke={`url(#seg${i})`} strokeWidth="8" />)}
        <path d="M1311 239 1334 228M1318 274 1338 264" stroke="#1a98e6" strokeWidth="12" />
        <path d="M1311 239 1334 228" stroke="#2e9406" strokeWidth="10" />
        <path d="M1318 274 1338 264" stroke="#2e9406" strokeWidth="7.500" />
        <path d="M1276 551 1300 546M1274 552v9" stroke="#2e8c08" strokeWidth="9" />
      </g>
      {ARROWS.map(([x, y, r]) => <path key={`${x}-${y}`} transform={`translate(${x} ${y}) rotate(${r})`} d="M0-5 5 4.500H-5z" fill="#5f5f5f" />)}

      <path d="M965 150l9 0-2 14z" fill="#78909c" />
      <Marker x={954} y={106} n="" /><Marker x={949} y={110} n="9" />
      <Marker x={977.500} y={140} n="10" />
      <g>
        <path d="M974 148c8-5 14 3 27-2v8c-8 5-16-2-24 3z" fill="#fff" stroke="#111" strokeWidth="1.500" />
        <path d="M976 148h4v4h-4zM985 147h4v4h-4zM994 148h4v4h-4zM980 152h5v4h-5zM990 151h4v4h-4z" fill="#111" />
      </g>
      <Marker x={977} y={157} n="8" tip={false} /><Marker x={985} y={161.500} n="5" />
      <circle cx="1346" cy="202" r="13" fill={ORANGE} />
      <Marker x={1327} y={196} n="" tip={false} /><Marker x={1322.500} y={196} n="12" /><Marker x={1320.500} y={236} n="4" />
      <g transform="translate(946 175) rotate(-33)">
        <rect x="-8" y="-19" width="16" height="36" rx="3" fill="#f0961e" stroke="#a8640c" strokeWidth=".8" />
        <path d="M-6-9H6l-1 5H-5zM-6 2c4-2 8-2 12 0v9H-6z" fill="#2c2008" />
      </g>
      <circle cx="945.500" cy="152" r="15" fill="#f59a1c" stroke="#fff" strokeWidth=".8" />
      <path d="M938 162h15l-7.500 9z" fill="#18b010" />
      <circle cx="945" cy="152" r="12.500" fill="#18b010" />
      <circle cx="945" cy="152" r="9" stroke="#e8b83a" strokeWidth="1.300" />
      <path d="M945 146l4.500 11-4.500-2.500-4.500 2.500z" stroke="#e8c84a" strokeWidth="1.400" />
    </svg>
  );
}

/* ---------- data ---------- */
const STOPS = [
  ['00:00', 1, ['PSA Cruise Port, Đường số 3, Khu', 'công nghiệp Phú Mỹ 1, P. Phú Mỹ, TX.'], '3h 36m', '00:00 - 03:36'],
  ['03:36', 0, ['15.6 km'], '2h 39s', '03:36 - 05:37'],
  ['05:37', 2, ['Đường số 3, Khu công nghiệp Phú Mỹ', '1, P. Phú Mỹ, TX. Phú Mỹ, T. Bà Rịa-'], '13m 27s', '05:37 - 05:51'],
  ['05:51', 0, ['5.03 km'], '9m 35s', '05:51 - 06:00'],
  ['06:00', 3, ['Khu công nghiệp Phú Mỹ 1, P. Tân', 'Phước, TX. Phú Mỹ, T. Bà Rịa-Vũng'], '1h 10m', '06:00 - 07:10'],
  ['07:10', 0, ['1.05 km'], '5m 8s', '07:10 - 07:15'],
  ['07:15', 4, ['Đường 965, Khu công nghiệp Phú Mỹ', '1, P. Tân Phước, TX. Phú Mỹ, T. Bà'], '11m 56s', '07:15 - 07:27'],
  ['07:27', 0, ['5.24 km'], '8m 8s', '07:27 - 07:35'],
  ['07:35', 5, ['Đường số 3, Khu công nghiệp Phú Mỹ', '1, P. Phú Mỹ, TX. Phú Mỹ, T. Bà Rịa-']],
];
const DOTS = [132, 183, 191, 198, 206, 222, 238, 250, 261, 273, 299, 312, 322, 328];
const LEGEND = [
  ['Đang chạy', '#2eaa4a', 81], ['Dừng', '#f00', 54], ['Dừng mở khóa', '#ff9f0a', 104], ['GPS kém', '#6b3285', 74],
  ['GPRS kém', '#1f2a33', 83], ['Truyền lịch sử', '#a9a9a9', 101], ['Hết hạn dịch vụ', '#521b0e', 109], ['Chưa kích hoạt', '#d9d9d9', 95],
];
const ADDRESS = 'PSA Cruise Port, Đường số 3, Khu công nghiệp Phú Mỹ 1, P. Phú Mỹ, TX. Phú Mỹ, T. Bà Rịa-Vũng Tàu';
const HEAD = ['#', 'Thời gian thiết bị', 'Tốc độ(km/h)', 'Địa chỉ', 'GSM', 'GPS', 'Nguồn(V)', 'Pin', 'Cập nhật lúc'];
const ROWS = [
  ['00:00:01', 14, '27.4', '00:00:04'], ['00:00:33', 13, '26', '00:00:35'], ['00:01:03', 15, '26', '00:01:23'],
  ['00:01:34', 14, '26', '00:01:44'], ['00:02:07', 13, '25.9', '00:02:16'], ['00:02:37', 11, '25.8', '00:02:43'],
];

export default function App() {
  return (
    <>
      <GlobalStyle />
      <Screen>
        <Rail>
          <Logo>LO<br />GO</Logo>
          <RailTop>
            <RailItem $h={50}><AiOutlineSearch size={20} /></RailItem>
            <RailItem $h={50}><LayoutIcon /></RailItem>
            <RailItem $h={38} $on><MapPinIcon /></RailItem>
            <RailItem $h={50}><StoreIcon /></RailItem>
            <RailItem $h={38}><AiOutlineCamera size={20} /></RailItem>
            <RailItem $h={57}><MonitorIcon /></RailItem>
            <RailItem $h={41}><ShapesIcon /></RailItem>
            <RailItem $h={54}><FaTools size={18} /></RailItem>
            <RailItem $h={44}><StallIcon /></RailItem>
          </RailTop>
          <RailBottom>
            <RailItem $h={46}><AiOutlineUser size={18} /></RailItem>
            <RailItem><RingingIcon /></RailItem>
            <RailItem><TicketIcon /></RailItem>
            <RailItem><HeadsetIcon /></RailItem>
            <RailItem><AiOutlineLogout size={19} /></RailItem>
          </RailBottom>
        </Rail>

        <Panel>
          <PanelTop>
            <VehicleRow>
              <AiOutlineArrowLeft size={16} />
              <VehicleSelect>S400 (GoTrack)-76578<AiOutlineDown size={12} color="#bfbfbf" /></VehicleSelect>
              <AiOutlineSetting className="gear" size={17} />
            </VehicleRow>
            <PanelTabs>
              <PanelTab><FaCar size={20} />Hiện tại</PanelTab>
              <PanelTab $on><FaRoute size={20} />Lộ trình</PanelTab>
              <PanelTab><AiOutlineBell size={20} />Thông báo</PanelTab>
            </PanelTabs>
          </PanelTop>
          <RangeRow>
            <DateText $w={98}>2022-08-18 00:00</DateText>
            <RangeArrow $gap={22} width="14" height="12" viewBox="0 0 14 12" fill="none" stroke="#bdbdbd" strokeWidth="1.500"><path d="M1 0v12M3 6h10M9 2.500 12.500 6 9 9.500" /></RangeArrow>
            <DateText $w={98}>2022-08-18 23:59</DateText>
            <RangeArrow $gap={11} width="14" height="12" viewBox="0 0 14 12" fill="none" stroke="#bdbdbd" strokeWidth="1.500"><path d="M13 0v12M11 6H1M5 2.500 1.500 6 5 9.500" /></RangeArrow>
            <RangeSearch />
            <AiOutlineSearch size={16} />
          </RangeRow>
          <PlayerRow>
            <SquareButton $w={32}><svg width="6" height="11" viewBox="0 0 6 11"><path d="M0 0 6 5.500 0 11z" fill="#111" /></svg></SquareButton>
            <Slider>
              {DOTS.map((x) => <SliderDot key={x} style={{ left: x - 111 }} />)}
              <SliderHandle />
            </Slider>
            <SquareButton $w={34}>x8</SquareButton>
          </PlayerRow>
          <ScrollArea>
            <Timeline>
              <DayHeader><AiOutlineDown size={12} />18/08/2022</DayHeader>
              <Stops>
                {STOPS.map(([time, n, lines, dur, range]) => (
                  <Stop key={time} $move={!n}>
                    <StopTime>{time}</StopTime>
                    {n ? <StopBadge>{n}</StopBadge> : <MoveRing />}
                    <StopBody>
                      {lines.map((l) => <Address key={l}>{l}</Address>)}
                      {dur && <StopMeta $move={!n}><AiOutlineClockCircle size={13} /><span>{dur}</span><span>{range}</span></StopMeta>}
                    </StopBody>
                  </Stop>
                ))}
              </Stops>
            </Timeline>
            <Scrollbar><Chevron up /><Thumb /><Chevron /></Scrollbar>
          </ScrollArea>
          <Summary>
            <SummaryHead>
              <AiOutlineDown size={12} /><span>Tổng hợp</span>
              <MiniButton><PolygonIcon size={14} /></MiniButton>
              <MiniButton><ExitIcon /></MiniButton>
            </SummaryHead>
            <SummaryRow>Lái xe:<b>4 giờ 49 phút</b></SummaryRow>
            <SummaryRow>Dừng:<b>10 giờ 48 phút</b></SummaryRow>
            <SummaryRow>Quãng đường:<b>62.93 km</b></SummaryRow>
          </Summary>
        </Panel>

        <Main>
          <MapArea>
            <MapDrawing />
            <MapButtons>
              <MapButton $mb={9}>i</MapButton>
              <MapButton><MdSearch size={17} /></MapButton>
              <MapButton $mb={1}>
                <svg width="16" height="14" viewBox="0 0 16 14"><path d="M1 8 13 2l2 4L3 12z" fill="#222" /><path d="M4 6.500l1 2M6.500 5.200l1 2M9 4l1 2M11.500 2.800l1 2" stroke="#fff" /></svg>
              </MapButton>
              <MapButton><ExpandIcon size={16} /></MapButton>
            </MapButtons>
            <Legend>{LEGEND.map(([t, c, w]) => <LegendItem key={t} $c={c} $w={w}>{t}</LegendItem>)}</Legend>
            <MapTools><AiOutlineSetting size={14} /><AiOutlineLeft size={13} /></MapTools>
          </MapArea>
          <DataTabs>
            <DataTab $on>Dữ liệu lịch sử</DataTab><DataTab>Tốc độ</DataTab><DataTab>GPS/GSM</DataTab><DataTab>Pin/Nguồn</DataTab><DataTab>Dầu</DataTab>
            <CloseButton>X</CloseButton>
          </DataTabs>
          <TableWrap>
            <Table>
              <TableRow $head>{HEAD.map((h) => <Cell key={h}>{h}</Cell>)}</TableRow>
              {ROWS.map(([t, gps, v, u], i) => (
                <TableRow key={t} $on={i === 0}>
                  <Cell>{i + 1}</Cell><Cell>2022/08/18 {t}</Cell><Cell>0</Cell><Cell>{ADDRESS}</Cell><Cell>23</Cell><Cell>{gps}</Cell><Cell>{v}</Cell><Cell>Không có pin</Cell><Cell>2022/08/18 {u}</Cell>
                </TableRow>
              ))}
            </Table>
            <TableBars>
              <Scrollbar $h={39} $bg="#f7f7f7"><Chevron up /><Chevron /></Scrollbar>
              <Scrollbar $h={164} $bg="linear-gradient(90deg, #e6e6e6, #fafafa)"><Chevron up /><Chevron /></Scrollbar>
            </TableBars>
          </TableWrap>
          <Pager>
            <SquareButton $w={32}><AiOutlineFileExcel size={17} color="#149414" /></SquareButton>
            <PagerTotal>Tổng 1882</PagerTotal>
            <PageItem $w={19} $dim><AiOutlineLeft size={12} /></PageItem>
            <PageItem $on>1</PageItem>
            {[2, 3, 4, 5].map((n) => <PageItem key={n}>{n}</PageItem>)}
            <PageItem $w={34} $dim><svg width="18" height="4" viewBox="0 0 18 4" fill="#bfbfbf"><circle cx="2" cy="2" r="1.600" /><circle cx="9" cy="2" r="1.600" /><circle cx="16" cy="2" r="1.600" /></svg></PageItem>
            <PageItem $w={35}>314</PageItem>
            <PageItem><AiOutlineRight size={13} /></PageItem>
            <PageSize>6/trang<AiOutlineDown size={11} color="#bfbfbf" /></PageSize>
          </Pager>
          <MapEdge />
          <Toolbar>
            <ToolGroup>
              <AiOutlineSetting size={18} /><AiOutlinePlus size={18} /><AiOutlineMinus size={18} />
              <Line size={18}><path d="M22 2 2.500 13.500l8 1.500 2.500 7.500z" /></Line>
              <ExpandIcon />
            </ToolGroup>
            <ToolGroup>
              <ExpandIcon><path d="M17.500 6.500 6 13l5 .8 1.800 5z" fill="currentColor" stroke="none" /></ExpandIcon>
              <FaRoute size={17} />
              <PolygonIcon size={18} />
              <Line size={18} w={1.500}><path d="M9 3 3.500 8v13.500h14L21 12.500 16.500 6z" /></Line>
              <MapPinIcon size={19} />
            </ToolGroup>
          </Toolbar>
        </Main>

        <Frame $x={65} $y={126} $w={311} $h={33} />
        <Frame $x={843} $y={56} $w={669} $h={544} />
        <Frame $x={59} $y={321} $w={317} $h={62} />
        <Frame $x={60} $y={512} $w={316} $h={88} />
        <Frame $x={58} $y={837} $w={318} $h={108} />
        <Callout $x={378} $y={122}>1</Callout>
        <Callout $x={1157} $y={57}>2</Callout>
        <Callout $x={377} $y={322}>3</Callout>
        <Callout $x={377} $y={513}>4</Callout>
        <Callout $x={176} $y={838}>5</Callout>
      </Screen>
    </>
  );
}
